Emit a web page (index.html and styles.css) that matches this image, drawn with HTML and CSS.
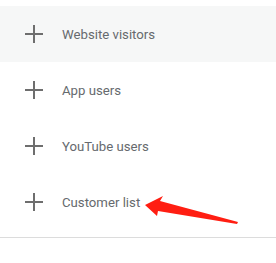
FILE: index.html
```html
<!DOCTYPE html>
<html lang="en">
<head>
  <meta charset="UTF-8">
  <title>Audience sources</title>
  <link rel="stylesheet" href="styles.css">
</head>
<body>

<div class="panel">
  <ul class="source-list">
    <li class="source active">
      <svg class="plus" width="18" height="18" viewBox="0 0 18 18"><path d="M9 0v18M0 9h18" stroke="currentColor" stroke-width="2"/></svg>
      <span>Website visitors</span>
    </li>
    <li class="source">
      <svg class="plus" width="18" height="18" viewBox="0 0 18 18"><path d="M9 0v18M0 9h18" stroke="currentColor" stroke-width="2"/></svg>
      <span>App users</span>
    </li>
    <li class="source">
      <svg class="plus" width="18" height="18" viewBox="0 0 18 18"><path d="M9 0v18M0 9h18" stroke="currentColor" stroke-width="2"/></svg>
      <span>YouTube users</span>
    </li>
    <li class="source">
      <svg class="plus" width="18" height="18" viewBox="0 0 18 18"><path d="M9 0v18M0 9h18" stroke="currentColor" stroke-width="2"/></svg>
      <span>Customer list</span>
    </li>
  </ul>
  <div class="divider"></div>

  <svg class="arrow" width="100" height="32" viewBox="0 0 100 32">
    <path d="M0 10 L18 1 L15 6 L93 27 L92 29 L13 16 L12 21 Z" fill="#ff1e12"/>
  </svg>
</div>

</body>
</html>
```

FILE: styles.css
```css
body {
  margin: 0;
  background: #fff;
  font-family: Roboto, "Noto Sans", sans-serif;
}
.panel {
  position: relative;
  padding-top: 6px;
}
.source-list {
  list-style: none;
  margin: 0;
  padding: 0;
}
.source {
  height: 56px;
  display: flex;
  align-items: center;
  padding-left: 25px;
  font-size: 13.2px;
  color: #666a6e;
}
.source.active {
  background: #f6f7f7;
}
.plus {
  color: #6e6e6e;
  margin-right: 19px;
}
.divider {
  margin-top: 7px;
  height: 1px;
  background: #dcdcdc;
}
.arrow {
  position: absolute;
  left: 145px;
  top: 195px;
}
```
